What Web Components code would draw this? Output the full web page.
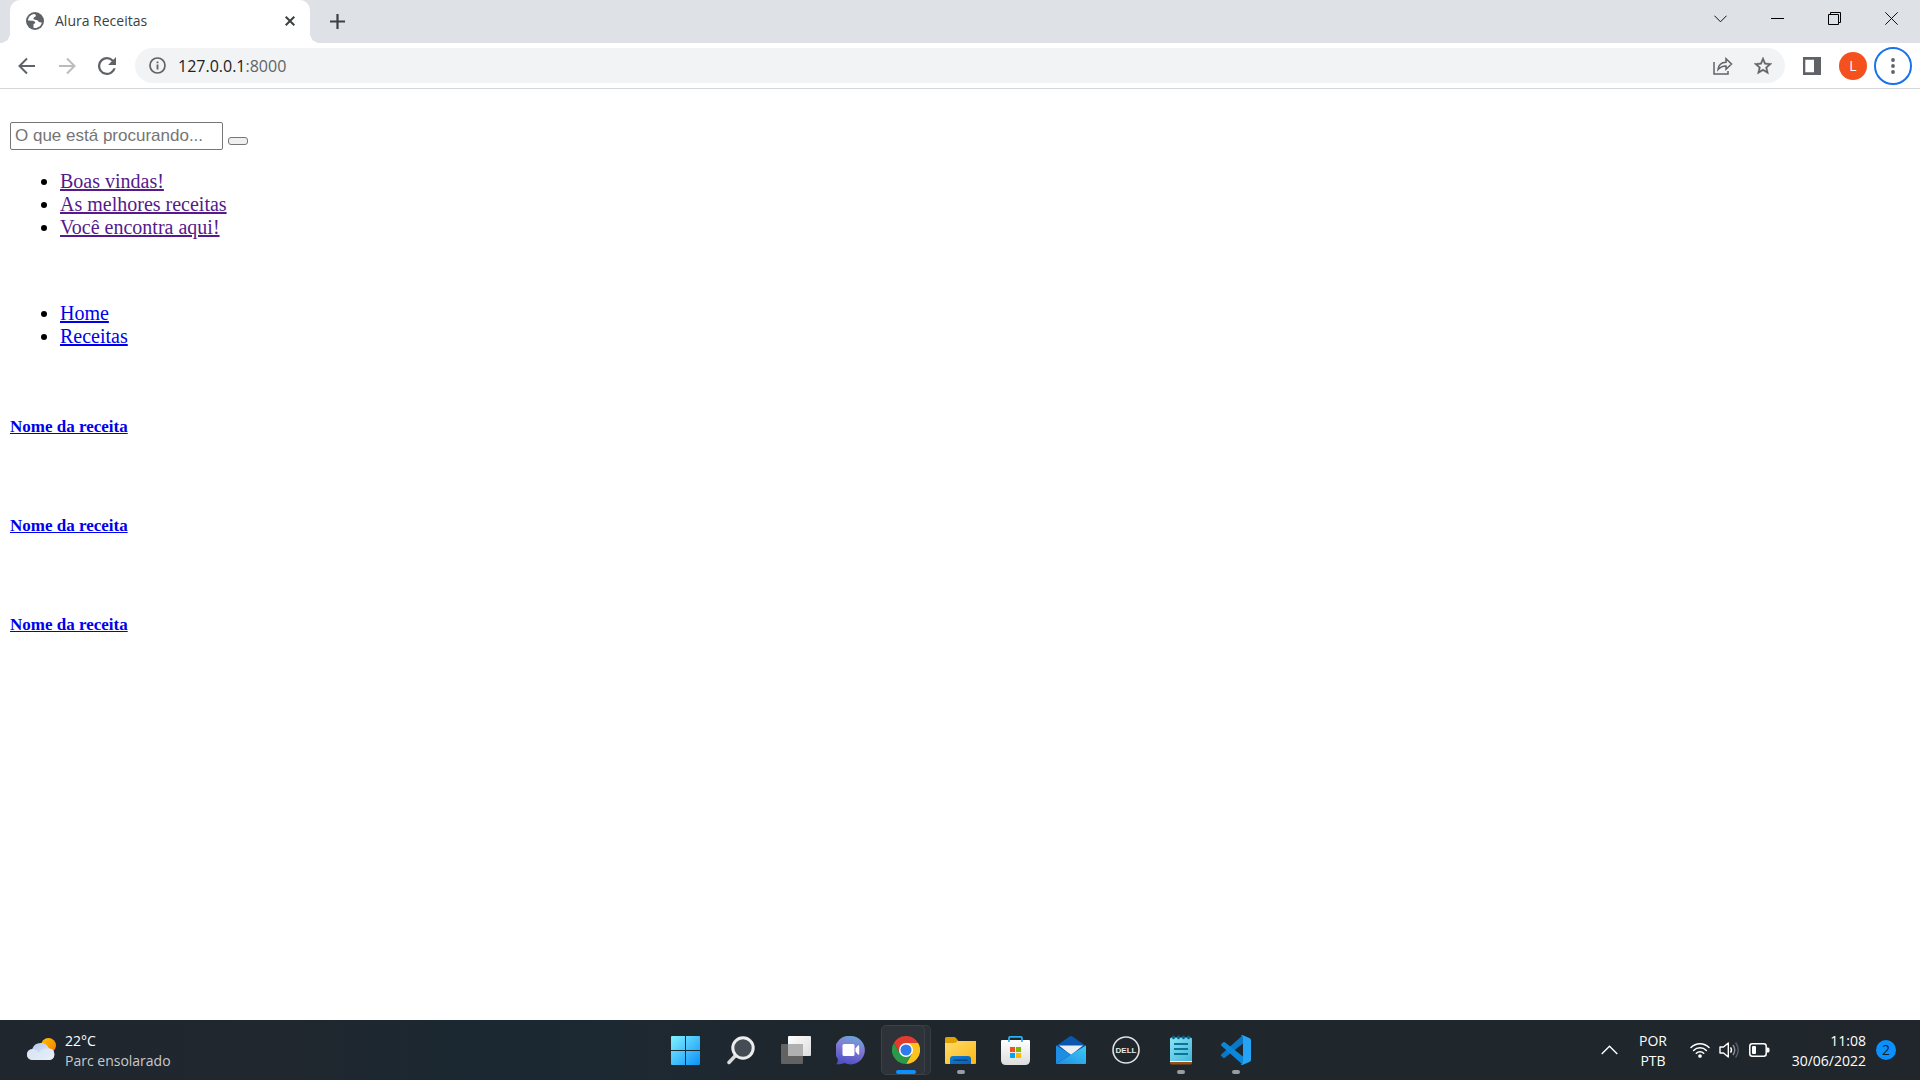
<!DOCTYPE html>
<html lang="pt-BR">
<head>
<meta charset="utf-8">
<title>Alura Receitas</title>
<style>
html, body { height: 100%; }
body { margin: 0; background: #fff; font-family: "Open Sans", "Noto Sans", sans-serif; }
desktop-screen { min-height: 100%; }
</style>
</head>
<body>
<desktop-screen>
  <browser-tabs slot="chrome">Alura Receitas</browser-tabs>
  <browser-toolbar slot="chrome" host="127.0.0.1" port=":8000"></browser-toolbar>
  <recipe-page>
    <search-form></search-form>
    <link-list class="visited">
      <link-item visited>Boas vindas!</link-item>
      <link-item visited>As melhores receitas</link-item>
      <link-item visited>Você encontra aqui!</link-item>
    </link-list>
    <link-list>
      <link-item>Home</link-item>
      <link-item>Receitas</link-item>
    </link-list>
    <recipe-list>
      <recipe-card>Nome da receita</recipe-card>
      <recipe-card>Nome da receita</recipe-card>
      <recipe-card>Nome da receita</recipe-card>
    </recipe-list>
  </recipe-page>
  <task-bar slot="taskbar"></task-bar>
</desktop-screen>

<script>
const base = `
*, *::before, *::after { box-sizing: border-box; }
svg { display: block; flex: none; }
button { font: inherit; color: inherit; background: none; border: 0; margin: 0; padding: 0; }
.ic { display: flex; align-items: center; justify-content: center; }
`;
function define(name, css, html) {
  customElements.define(name, class extends HTMLElement {
    constructor() {
      super();
      this.attachShadow({ mode: 'open' });
    }
    connectedCallback() {
      this.shadowRoot.innerHTML = `<style>${base}${css}</style>` + (typeof html === 'function' ? html(this) : html);
    }
  });
}

define('desktop-screen', `
:host { display: flex; flex-direction: column; }
main { flex: 1; background: #fff; }
`, `<header><slot name="chrome"></slot></header><main><slot></slot></main><slot name="taskbar"></slot>`);

define('browser-tabs', `
:host { display: flex; box-sizing: border-box; height: 43px; background: #dee1e6; padding-left: 10px; color: #3c4043; }
.tab { position: relative; display: flex; align-items: center; width: 300px; height: 43px; padding: 0 12px 1px 16px; background: #fff; border-radius: 10px 10px 0 0; font-size: 14px; line-height: 20px; }
.tab::before, .tab::after { content: ""; position: absolute; bottom: 0; width: 10px; height: 10px; }
.tab::before { right: 100%; background: radial-gradient(circle at 0 0, #dee1e6 10px, #fff 10px); }
.tab::after { left: 100%; background: radial-gradient(circle at 100% 0, #dee1e6 10px, #fff 10px); }
.title { flex: 1; padding-left: 11px; }
.tab button { width: 17px; height: 20px; }
.new { width: 54px; height: 42px; }
.win { display: flex; margin-left: auto; height: 37px; color: #111; }
.win button { width: 57px; }
`, `
<div class="tab">
  <svg width="18" height="18" viewBox="0 0 18 18"><circle cx="9" cy="9" r="9" fill="#5f6368"/><path fill="#fff" d="M8.500 2C5 2.200 2.300 4.800 2 8.500l4.800.3c1.600.2 2.500 1 2.400 2.400L7.500 12v3.800c4 .9 7.600-1.600 8.300-5.300l-2.300-.2c-1.200-.3-1.300-1.600-2.300-2C9.800 7.800 8 8 7.500 6.700c-.3-1.400 1.500-1.500 2.300-2.400C10.300 3.500 9.500 2.500 8.500 2z"/></svg>
  <span class="title"><slot></slot></span>
  <button class="ic" aria-label="Fechar guia"><svg width="10" height="10" viewBox="0 0 10 10" fill="none" stroke="currentColor" stroke-width="2"><path d="M.7.700l8.600 8.600M9.300.700L.7 9.300"/></svg></button>
</div>
<button class="new ic" aria-label="Nova guia"><svg width="15" height="15" viewBox="0 0 15 15" stroke="currentColor" stroke-width="2.200"><path d="M7.500 0v15M0 7.500h15"/></svg></button>
<div class="win">
  <button class="ic" aria-label="Pesquisar guias"><svg width="13" height="8" viewBox="0 0 13 8" fill="none" stroke="currentColor"><path d="M.4.700l6.100 6.100L12.600.700"/></svg></button>
  <button class="ic" aria-label="Minimizar"><svg width="13" height="13" viewBox="0 0 13 13" shape-rendering="crispEdges"><path fill="#000" d="M0 6h13v1H0z"/></svg></button>
  <button class="ic" aria-label="Restaurar"><svg width="13" height="13" viewBox="0 0 13 13" fill="none" stroke="#000"><path d="M.5 2.500h10v10H.5zM2.500 2.500v-2h10v10h-2"/></svg></button>
  <button class="ic" aria-label="Fechar"><svg width="13" height="13" viewBox="0 0 13 13" stroke="currentColor"><path d="M.3.300l12.400 12.400M12.700.300L.3 12.700"/></svg></button>
</div>`);

define('browser-toolbar', `
:host { display: flex; box-sizing: border-box; align-items: center; height: 46px; padding: 0 8px 0 7px; background: #fff; border-bottom: 1px solid #d5d7da; color: #5f6368; }
.nav { width: 40px; height: 40px; }
.box { flex: 1; display: flex; align-items: center; height: 35px; margin-left: 8px; padding: 0 2px 0 14px; background: #f1f3f4; border-radius: 18px; }
.url { flex: 1; margin-left: 12px; font-size: 16px; line-height: 22px; color: #5f6368; }
.url b { font-weight: 400; color: #202124; }
.act { width: 40px; height: 35px; }
.side { margin: 0 18px; }
.avatar { width: 28px; height: 28px; margin-right: 7px; border-radius: 50%; background: #f4511e; color: #fff; font-size: 14px; line-height: 28px; text-align: center; }
.menu { width: 38px; height: 38px; border: 2px solid #1a73e8; border-radius: 50%; }
`, el => `
<button class="nav ic" aria-label="Voltar"><svg width="18" height="18" viewBox="0 0 18 18" fill="none" stroke="currentColor" stroke-width="2"><path d="M17 9H2M9 1.500L1.500 9 9 16.500"/></svg></button>
<button class="nav ic" aria-label="Avançar"><svg width="18" height="18" viewBox="0 0 18 18" fill="none" stroke="#babcbe" stroke-width="2"><path d="M1 9h15M9 1.500L16.500 9 9 16.500"/></svg></button>
<button class="nav ic" aria-label="Recarregar"><svg width="18" height="18" viewBox="4 4 16 16"><path fill="currentColor" d="M17.650 6.350A7.960 7.960 0 0 0 12 4a8 8 0 1 0 7.730 10h-2.080A6 6 0 1 1 12 6c1.660 0 3.140.690 4.220 1.780L13 11h7V4z"/></svg></button>
<div class="box">
  <svg width="17" height="17" viewBox="0 0 17 17"><circle cx="8.500" cy="8.500" r="7.500" fill="none" stroke="currentColor" stroke-width="1.700"/><path fill="currentColor" d="M7.600 7.600h1.800v5H7.600zM7.600 4.400h1.800v1.900H7.600z"/></svg>
  <span class="url"><b>${el.getAttribute('host')}</b>${el.getAttribute('port')}</span>
  <button class="act ic" aria-label="Compartilhar"><svg width="20" height="18" viewBox="0 0 20 18" fill="none" stroke="currentColor" stroke-width="1.500"><path d="M1 5v12h14v-3M5 12.500c.500-4.500 3.500-7 8-7.200V1.700l5.500 5.300-5.500 5.200V8.900c-3.500 0-5.800 1-8 3.600z"/></svg></button>
  <button class="act ic" aria-label="Favoritar"><svg width="18" height="18" viewBox="2 2 20 20"><path fill="currentColor" stroke="currentColor" stroke-width=".4" d="M22 9.240l-7.190-.620L12 2 9.190 8.630 2 9.240l5.460 4.730L5.820 21 12 17.270 18.180 21l-1.630-7.030zM12 15.400l-3.760 2.270 1-4.280-3.320-2.880 4.380-.380L12 6.100l1.710 4.040 4.380.380-3.320 2.880 1 4.280z"/></svg></button>
</div>
<button class="side" aria-label="Painel lateral"><svg width="18" height="18" viewBox="0 0 18 18"><path fill="currentColor" fill-rule="evenodd" d="M0 0h18v18H0zM2.300 2.800v12.400h8.700V2.800z"/></svg></button>
<button class="avatar">L</button>
<button class="menu ic" aria-label="Menu"><svg width="4" height="16" viewBox="0 0 4 16" fill="currentColor"><circle cx="2" cy="2" r="1.900"/><circle cx="2" cy="8" r="1.900"/><circle cx="2" cy="14" r="1.900"/></svg></button>`);

define('recipe-page', `
:host { display: flex; flex-direction: column; padding: 33px 10px 20px; font-family: "Liberation Serif", serif; font-size: 20px; line-height: 23px; color: #000; }
::slotted(link-list) { margin-top: 20px; }
::slotted(.visited) { margin-bottom: 43px; }
::slotted(recipe-list) { margin-top: 69px; }
`, `<slot></slot>`);

define('search-form', `
:host { display: block; }
form { display: flex; align-items: flex-end; gap: 5px; }
input { width: 213px; height: 28px; margin: 0; padding: 1px 4px; border: 1px solid #767676; border-radius: 2px; background: #fff; font: 17px "Liberation Sans", sans-serif; }
input::placeholder { color: #757575; }
button { width: 20px; height: 8px; margin-bottom: 5px; background: #efefef; border: 1px solid #767676; border-radius: 3px; }
`, `<form><input type="text" aria-label="Pesquisar" placeholder="O que está procurando..."><button type="button" aria-label="Buscar"></button></form>`);

define('link-list', `:host { display: block; } ul { margin: 0; padding: 0 0 0 50px; }`,
  `<ul><slot></slot></ul>`);

define('link-item', `
:host { display: list-item; list-style: disc; }
a { color: #0000ee; }
:host([visited]) a { color: #551a8b; }
`, `<a href="#"><slot></slot></a>`);

define('recipe-list', `:host { display: flex; flex-direction: column; gap: 79px; }`, `<slot></slot>`);

define('recipe-card', `
:host { display: block; }
h5 { margin: 0; font-size: 17px; line-height: 20px; }
a { color: #0000ee; }
`, `<h5><a href="#"><slot></slot></a></h5>`);

define('task-app', `
:host { display: flex; width: 55px; height: 60px; position: relative; }
button { flex: 1; }
:host([running])::after { content: ""; position: absolute; left: 24px; top: 50px; width: 8px; height: 4px; border-radius: 2px; background: #9a9d9f; }
:host([active])::after { left: 18px; width: 20px; background: #0a91ff; }
:host([active])::before { content: ""; position: absolute; left: 3px; top: 5px; width: 44px; height: 50px; border-radius: 5px; background: #2d3338; border: 1px solid #3b4146; box-shadow: 6px 0 0 -1px #2a3035, 6px 0 0 0 #373d42; }
button { position: relative; z-index: 1; }
`, el => `<button class="ic" aria-label="${el.getAttribute('name')}"><slot></slot></button>`);

define('task-bar', `
:host { display: grid; grid-template-columns: 1fr auto 1fr; height: 60px; color: #fff; font-size: 14px; line-height: 20px; background: linear-gradient(90deg, #20262e 0, #21272e 14%, #1b2831 24%, #1d2932 32%, #1f262c 45%, #20262c 100%); }
.weather { display: flex; align-items: center; gap: 9px; padding-left: 27px; text-align: left; justify-self: start; }
.weather span, .lang, .clock { padding-top: 2px; }
.weather small { display: block; font-size: 14px; color: #c8cacc; }
.weather svg { margin-bottom: 2px; }
.apps { display: flex; padding-left: 1px; }
.tray { display: flex; align-items: center; justify-content: flex-end; padding-right: 24px; }
.lang { width: 36px; margin: 0 19px 0 17px; text-align: center; }
.status { display: flex; align-items: center; gap: 9px; }
.clock { margin-left: 19px; width: 77px; text-align: right; }
.badge { width: 20px; height: 20px; margin-left: 10px; border-radius: 50%; background: #0a91ff; color: #10202c; text-align: center; }
`, `
<button class="weather">
  <svg width="29" height="22" viewBox="0 0 29 22"><defs><linearGradient id="sun" x2="1" y2="1"><stop stop-color="#ffc400"/><stop offset="1" stop-color="#f77800"/></linearGradient><linearGradient id="cl" x2="1" y2="1"><stop stop-color="#adc3e8"/><stop offset="1" stop-color="#f2f6fc"/></linearGradient></defs><circle cx="21.500" cy="7.500" r="7.500" fill="url(#sun)"/><path fill="url(#cl)" d="M5.500 22a5.500 5.500 0 0 1-.3-11A9 9 0 0 1 22 10.500 5.800 5.800 0 0 1 22.500 22z"/><path fill="#e3ecf8" opacity=".7" d="M5.500 22a5.500 5.500 0 0 1 0-11c3 0 5 1.500 6 4 2-3.500 6-4.500 10.500-4.500A5.800 5.800 0 0 1 22.500 22z"/></svg>
  <span>22°C<small>Parc ensolarado</small></span>
</button>
<nav class="apps">
  <task-app name="Iniciar"><svg width="29" height="29" viewBox="0 0 29 29"><defs><linearGradient id="win" gradientUnits="userSpaceOnUse" x1="0" y1="0" x2="29" y2="29"><stop stop-color="#82f2ff"/><stop offset="1" stop-color="#0a91f9"/></linearGradient></defs><path fill="url(#win)" d="M1 0h13v14H0V1q0-1 1-1zM15 0h13q1 0 1 1v13H15zM0 15h14v14H1q-1 0-1-1zM15 15h14v13q0 1-1 1H15z"/></svg></task-app>
  <task-app name="Pesquisar"><svg width="28" height="29" viewBox="0 0 28 29"><path d="M10 18L2 26.500" stroke="#d8dadb" stroke-width="3.500" stroke-linecap="round"/><circle cx="16" cy="12" r="10.200" fill="#454c54" stroke="#eceded" stroke-width="3"/></svg></task-app>
  <task-app name="Visão de tarefas"><svg width="30" height="28" viewBox="0 0 30 28"><defs><linearGradient id="tv" x2="1" y2="1"><stop stop-color="#fff"/><stop offset="1" stop-color="#dcdcdc"/></linearGradient></defs><rect y="8" width="22" height="20" rx="1" fill="#626262"/><rect x="7" width="23" height="20" rx="1" fill="url(#tv)"/><path d="M7 8h15v12H7z" fill="#b0b0b0"/></svg></task-app>
  <task-app name="Chat"><svg width="29" height="29" viewBox="0 0 29 29"><defs><linearGradient id="ch" x1=".7" y1="0" x2=".4" y2="1"><stop stop-color="#6aa7d8"/><stop offset=".45" stop-color="#8278d3"/><stop offset="1" stop-color="#4d50c4"/></linearGradient></defs><path fill="url(#ch)" d="M14.500 0a14.200 14.200 0 1 1-6 27C6 28.200 3 28.500.3 28.300c1.200-1.300 1.600-3 1.500-5.500A14.200 14.200 0 0 1 14.500 0z"/><rect x="6.500" y="8" width="12" height="12" rx="1.500" fill="#fff"/><path fill="#fff" d="M19.500 12.500L22 9.500q1.200-.8 1.200.5v8q0 1.300-1.200.5l-2.500-3z"/></svg></task-app>
  <task-app name="Google Chrome" running active><svg width="28" height="28" viewBox="0 0 48 48"><path fill="#e33b2e" d="M3.200 12A24 24 0 0 1 44.800 12H24L13.600 30z"/><path fill="#fcc31e" d="M44.800 12A24 24 0 0 1 24 48l10.400-18L24 12z"/><path fill="#2a9a48" d="M24 48A24 24 0 0 1 3.200 12l10.400 18h20.800z"/><circle cx="24" cy="24" r="12" fill="#fff"/><circle cx="24" cy="24" r="9.500" fill="#2f7bee"/></svg></task-app>
  <task-app name="Explorador de Arquivos" running><svg width="31" height="27" viewBox="0 0 31 27"><defs><linearGradient id="fo" x2="1" y2="1"><stop stop-color="#ffdc6b"/><stop offset="1" stop-color="#fbb714"/></linearGradient><linearGradient id="fb" x2="1" y2="1"><stop stop-color="#0f7fd6"/><stop offset="1" stop-color="#0c5fb0"/></linearGradient></defs><path fill="#e0a000" d="M0 1.500Q0 0 1.500 0H9q1 0 2 1l2.500 3H30q1 0 1 1v5H0z"/><path fill="url(#fo)" d="M0 6h9q1.500 0 2.500-1L12.500 4H31V26q0 1-1 1H1q-1 0-1-1z"/><path fill="url(#fb)" d="M5 27v-5q0-3 3-3h15q3 0 3 3v5z"/><path fill="#083f76" d="M8.500 22.500h14v1.300h-14z"/></svg></task-app>
  <task-app name="Microsoft Store"><svg width="29" height="29" viewBox="0 0 29 29"><defs><linearGradient id="st" x2="0" y2="1"><stop stop-color="#fff"/><stop offset="1" stop-color="#dcdcdc"/></linearGradient></defs><path fill="url(#st)" d="M1 4h27q1 0 1 1v19q0 5-5 5H5q-5 0-5-5V5q0-1 1-1z"/><path fill="none" stroke="#24b3f2" stroke-width="1.700" d="M8 6V2q0-1.200 1.200-1.200h10.600Q21 .8 21 2v4"/><path fill="#f25022" d="M9 11h5v5H9z"/><path fill="#7fba00" d="M15 11h5v5h-5z"/><path fill="#00a4ef" d="M9 17h5v5H9z"/><path fill="#ffb900" d="M15 17h5v5h-5z"/></svg></task-app>
  <task-app name="Email"><svg width="30" height="28" viewBox="0 0 30 28"><defs><linearGradient id="ma" x1="0" y1="1" x2="1" y2="0"><stop stop-color="#1f8de0"/><stop offset="1" stop-color="#3ccaf6"/></linearGradient></defs><path fill="#0a57ae" d="M0 10L13.500.6q1.500-1 3 0L30 10l-15 9z"/><path fill="#eceff2" d="M3 9.500h24L15 19z"/><path fill="url(#ma)" d="M30 9.500V27q0 1-1 1H1q-.7 0-1-.6z"/><path fill="#1e8ee4" d="M0 9.500L15 18.500 0 27.400z"/></svg></task-app>
  <task-app name="Dell"><svg width="28" height="28" viewBox="0 0 28 28"><circle cx="14" cy="14" r="13" fill="none" stroke="#dfe1e2" stroke-width="1.600"/><text x="14" y="17" text-anchor="middle" font-family="Liberation Sans, sans-serif" font-weight="700" font-size="8" fill="#e8e9ea">DELL</text></svg></task-app>
  <task-app name="Bloco de Notas" running><svg width="22" height="30" viewBox="0 0 22 30"><defs><linearGradient id="np" x2="1" y2="1"><stop stop-color="#8be3f5"/><stop offset="1" stop-color="#42b6d8"/></linearGradient></defs><path fill="#9c4f14" d="M0 24h22v4q0 1.500-1.500 1.500h-19Q0 29.500 0 28z"/><path fill="#f5f1ea" d="M0 23h22v4H0z"/><path fill="url(#np)" d="M0 4q0-1.500 1.500-1.500h19Q22 2.500 22 4v22H0z"/><path stroke="#03658c" stroke-width="2.600" stroke-linecap="round" d="M3.500 1.800v1.200M8.500 1.800v1.200M13.500 1.800v1.200M18.500 1.800v1.200"/><path stroke="#087599" stroke-width="2" d="M4 9h14M4 14h14M4 19h14"/></svg></task-app>
  <task-app name="Visual Studio Code" running><svg width="30" height="30" viewBox="0 0 30 30"><path fill="#0a78c8" d="M.4 19.300q-.8.900 0 1.800l1.700 1.600q.9.700 1.800 0L22 8.500V0z"/><path fill="#0b86d8" d="M.4 10.700q-.8-.9 0-1.800l1.700-1.600q.9-.7 1.800 0L22 21.500V30z"/><path fill="#25a3f4" d="M22 .2L28.800 3.200Q30 3.800 30 5v20q0 1.200-1.200 1.800L22 29.800q-1.500.3-2.500-.8 2.500.5 2.500-1.500v-25Q22 .5 19.500 1q1-1.100 2.500-.8z"/></svg></task-app>
</nav>
<div class="tray">
  <button aria-label="Ícones ocultos"><svg width="17" height="10" viewBox="0 0 17 10" fill="none" stroke="#fff" stroke-width="1.400"><path d="M.7 9L8.500 1.200 16.300 9"/></svg></button>
  <button class="lang">POR<br>PTB</button>
  <button class="status" aria-label="Rede, som e bateria">
    <svg width="20" height="16" viewBox="0 0 20 16" fill="none" stroke="#fff" stroke-width="1.500" stroke-linecap="round"><path d="M1 5.500a12.700 12.700 0 0 1 18 0M3.600 8.500a9 9 0 0 1 12.800 0M6.300 11.300a5.200 5.200 0 0 1 7.400 0"/><circle cx="10" cy="14" r="1.100" fill="#fff"/></svg>
    <svg width="21" height="18" viewBox="0 0 21 18" fill="none" stroke="#fff" stroke-width="1.400"><path stroke-linejoin="round" d="M1 6h3.500L9.300 2v14L4.500 12H1zM11.500 6.300q2 2.700 0 5.400"/><path stroke="#8b9094" d="M14 4q3.500 5 0 10"/><path stroke="#596066" d="M16.600 1.500q5.200 7.500 0 15"/></svg>
    <svg width="21" height="14" viewBox="0 0 21 14"><rect x=".8" y=".8" width="16.400" height="12.400" rx="2.500" fill="none" stroke="#fff" stroke-width="1.500"/><rect x="3" y="3" width="4" height="8" rx="1" fill="#fff"/><path fill="#fff" d="M18 4.500h1q1.500 0 1.500 1.500v2q0 1.500-1.500 1.500h-1z"/></svg>
  </button>
  <button class="clock">11:08<br>30/06/2022</button>
  <button class="badge">2</button>
</div>`);
</script>
</body>
</html>
